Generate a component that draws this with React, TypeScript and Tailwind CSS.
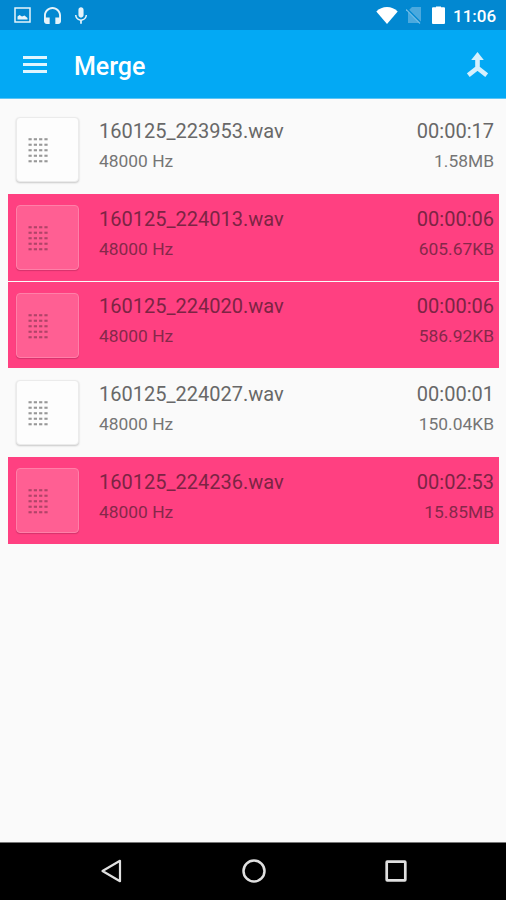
import { useState } from 'react';

type Recording = {
  name: string;
  rate: string;
  duration: string;
  size: string;
};

const RECORDINGS: Recording[] = [
  { name: '160125_223953.wav', rate: '48000 Hz', duration: '00:00:17', size: '1.58MB' },
  { name: '160125_224013.wav', rate: '48000 Hz', duration: '00:00:06', size: '605.67KB' },
  { name: '160125_224020.wav', rate: '48000 Hz', duration: '00:00:06', size: '586.92KB' },
  { name: '160125_224027.wav', rate: '48000 Hz', duration: '00:00:01', size: '150.04KB' },
  { name: '160125_224236.wav', rate: '48000 Hz', duration: '00:02:53', size: '15.85MB' },
];

function StatusBar() {
  return (
    <div className="h-[30px] bg-[#0288d1] flex items-center justify-between pl-[14px] pr-[9px] text-white">
      <div className="flex items-center">
        <svg width="17" height="16" viewBox="0 0 17 16" fill="none" className="opacity-90">
          <rect x="1" y="1" width="15" height="14" stroke="currentColor" strokeWidth="1.5" />
          <path d="M3.5 12.5V9.5l2-1.5 2.5 1.5 2.5-1 3 2.5v1.5z" fill="currentColor" />
        </svg>
        <svg width="17" height="17" viewBox="3 2 18 18" fill="currentColor" className="ml-[13px] opacity-90">
          <path d="M12 2c-4.97 0-9 4.03-9 9v6c0 1.66 1.34 3 3 3h3v-7H5v-2c0-3.87 3.13-7 7-7s7 3.13 7 7v2h-4v7h3c1.66 0 3-1.34 3-3v-6c0-4.97-4.03-9-9-9z" />
        </svg>
        <svg width="12" height="17" viewBox="5 2 14 19" fill="currentColor" className="ml-[14px] opacity-90">
          <path d="M12 14c1.66 0 3-1.34 3-3V5c0-1.66-1.34-3-3-3S9 3.34 9 5v6c0 1.66 1.34 3 3 3zM17.3 11c0 3-2.54 5.1-5.3 5.1S6.7 14 6.7 11H5c0 3.41 2.72 6.23 6 6.72V21h2v-3.28c3.28-.48 6-3.3 6-6.72z" />
        </svg>
      </div>
      <div className="flex items-center">
        <svg width="22" height="17" viewBox="0 0 22 17" fill="currentColor">
          <path d="M11 17 0.3 4.5C3 1.5 7 0 11 0s8 1.5 10.7 4.5z" />
        </svg>
        <svg width="16" height="18" viewBox="0 0 16 18" className="ml-[8px]">
          <path d="M6 1h9v16H2V5z" fill="#4ba9de" />
          <path d="M0.5 2.5l14.5 14.5" stroke="#0288d1" strokeWidth="1.8" />
          <path d="M0 3.5l14 14" stroke="#6fbbe5" strokeWidth="1.2" />
        </svg>
        <svg width="13" height="18" viewBox="0 0 13 18" fill="currentColor" className="ml-[10px]">
          <path d="M1 1.2h3V0.5h5v0.7h3q1 0 1 1V17q0 1-1 1H1q-1 0-1-1V2.200q0-1 1-1z" />
        </svg>
        <span className="ml-[8px] mt-[2px] w-[44px] text-[17px] leading-none font-medium whitespace-nowrap">11:06</span>
      </div>
    </div>
  );
}

function Toolbar() {
  return (
    <div className="h-[69px] bg-[#03a9f4] border-b border-[#5cc5f5] flex items-center pl-[23px] pr-[18px] text-white">
      <button type="button" aria-label="Menu" className="flex w-[24px] flex-col gap-[4px]">
        <span className="h-[3px] bg-[#e1f5fe]" />
        <span className="h-[3px] bg-[#e1f5fe]" />
        <span className="h-[3px] bg-[#e1f5fe]" />
      </button>
      <h1 className="ml-[27px] mt-[4px] text-[25px] leading-none font-medium">Merge</h1>
      <button type="button" aria-label="Merge files" className="ml-auto">
        <svg width="21" height="25" viewBox="0 0 21 25" fill="none">
          <path d="M10.5 0 16.8 8H4.200z" fill="#d5f0fd" />
          <path d="M10.5 6v9.5M1.3 23.200l9.200-7.200 9.200 7.200" stroke="#d5f0fd" strokeWidth="4.600" />
        </svg>
      </button>
    </div>
  );
}

function Thumb({ selected }: { selected: boolean }) {
  return (
    <div
      className={`h-[65px] w-[63px] shrink-0 rounded-[4px] border pl-[11px] pt-[20px] ${
        selected
          ? 'border-[#ff80a8] bg-[#ff5f93] shadow-[0_1px_1px_rgba(120,20,60,0.3)]'
          : 'border-[#ebebeb] bg-[#fdfdfd] shadow-[0_1px_2px_rgba(0,0,0,0.2)]'
      }`}
    >
      <svg width="20" height="26" viewBox="0 0 20 26">
        {[0, 1, 2, 3, 4].map((r) =>
          [0, 1, 2, 3].map((c) => (
            <rect
              key={`${r}-${c}`}
              x={c * 5.3 + 0.5}
              y={r * 5.5 + 0.2}
              width="3.2"
              height="2.1"
              fill={selected ? '#b04468' : '#989898'}
            />
          )),
        )}
      </svg>
    </div>
  );
}

function Row({ item, selected, onToggle }: { item: Recording; selected: boolean; onToggle: () => void }) {
  return (
    <li
      onClick={onToggle}
      className={`flex h-[86.7px] pl-[8px] pr-[5px] pt-[11px] ${selected ? 'bg-[#ff4081] text-[#85284a]' : 'text-[#757575]'}`}
    >
      <Thumb selected={selected} />
      <div className="ml-[20px] mt-[0.5px] flex-1">
        <p className={`text-[20px] leading-[26px] ${selected ? 'text-[#7c2444]' : 'text-[#686868]'}`}>{item.name}</p>
        <p className="mt-[5px] text-[17.4px] leading-[25px]">{item.rate}</p>
      </div>
      <div className="mt-[0.5px] text-right">
        <p className={`text-[20px] leading-[26px] ${selected ? 'text-[#7c2444]' : 'text-[#686868]'}`}>{item.duration}</p>
        <p className="mt-[5px] text-[17.4px] leading-[25px]">{item.size}</p>
      </div>
    </li>
  );
}

function NavBar() {
  return (
    <div className="h-[58px] bg-black border-t border-[#777] flex items-center justify-between pb-[2px] pl-[100px] pr-[99px] text-[#e0e0e0]">
      <svg width="22" height="24" viewBox="0 0 22 24" fill="none" stroke="currentColor" strokeWidth="2.2">
        <path d="M20 1.8v20.4L2.5 12z" strokeLinejoin="round" />
      </svg>
      <svg width="24" height="24" viewBox="0 0 24 24" fill="none" stroke="currentColor" strokeWidth="2.5">
        <circle cx="12" cy="12" r="10.5" />
      </svg>
      <svg width="22" height="22" viewBox="0 0 22 22" fill="none" stroke="currentColor" strokeWidth="2.7">
        <rect x="1.7" y="1.7" width="18.6" height="18.6" rx="0.5" />
      </svg>
    </div>
  );
}

export default function App() {
  const [selected, setSelected] = useState<number[]>([1, 2, 4]);

  const toggle = (i: number) =>
    setSelected((prev) => (prev.includes(i) ? prev.filter((n) => n !== i) : [...prev, i]));

  return (
    <div className="flex h-[900px] w-[506px] flex-col overflow-hidden bg-[#fafafa] font-['Roboto',sans-serif]">
      <StatusBar />
      <Toolbar />
      <ul className="flex flex-1 flex-col gap-px pl-[8px] pr-[7px] pt-[7.4px]">
        {RECORDINGS.map((item, i) => (
          <Row key={item.name} item={item} selected={selected.includes(i)} onToggle={() => toggle(i)} />
        ))}
      </ul>
      <NavBar />
    </div>
  );
}
